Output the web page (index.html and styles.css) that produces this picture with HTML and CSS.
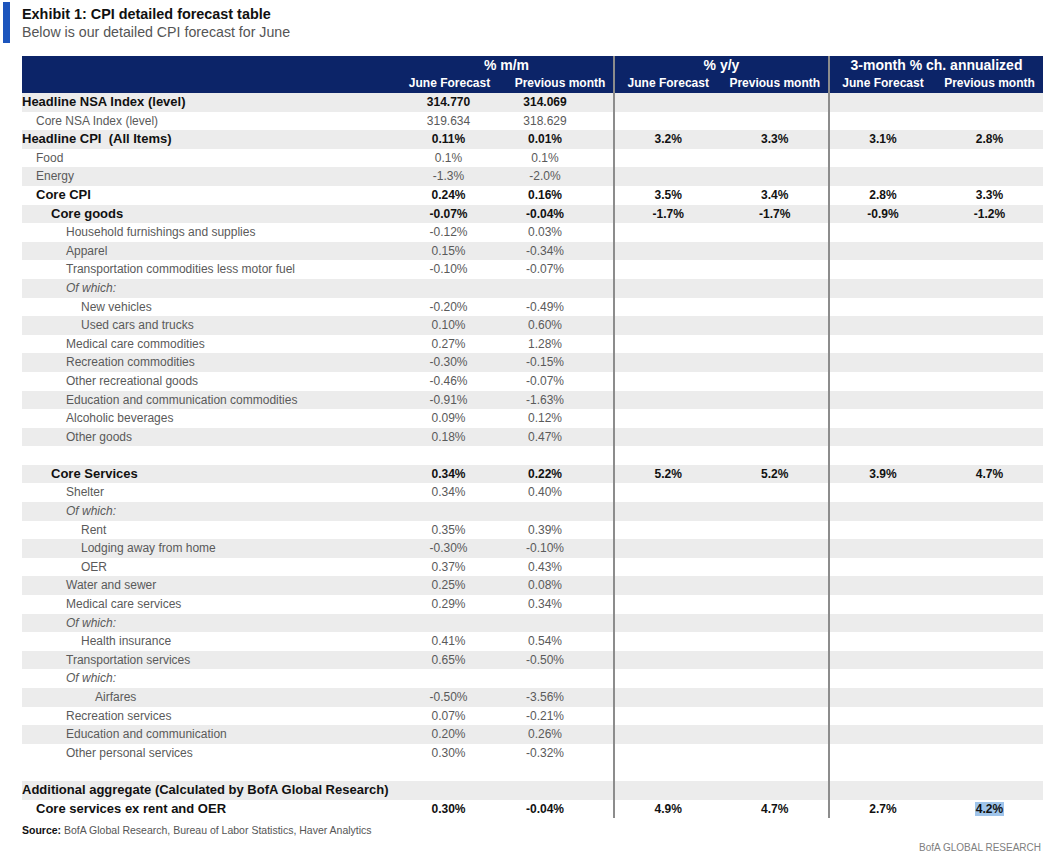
FILE: index.html
```html
<!DOCTYPE html>
<html lang="en">
<head>
<meta charset="utf-8">
<title>Exhibit 1: CPI detailed forecast table</title>
<link rel="stylesheet" href="styles.css">
</head>
<body>
<div class="page">
  <div class="exhibit-head">
    <div class="bar"></div>
    <div class="titles">
      <div class="title">Exhibit 1: CPI detailed forecast table</div>
      <div class="subtitle">Below is our detailed CPI forecast for June</div>
    </div>
  </div>

  <table class="cpi">
    <colgroup>
      <col class="c-label"><col class="c-a"><col class="c-b"><col class="c-c"><col class="c-d"><col class="c-e"><col class="c-f">
    </colgroup>
    <thead>
      <tr class="h1">
        <th></th>
        <th colspan="2" class="grp">% m/m</th>
        <th colspan="2" class="grp sep">% y/y</th>
        <th colspan="2" class="grp sep">3-month % ch. annualized</th>
      </tr>
      <tr class="h2">
        <th></th>
        <th class="sub s1">June Forecast</th>
        <th class="sub s2">Previous month</th>
        <th class="sub sep">June Forecast</th>
        <th class="sub">Previous month</th>
        <th class="sub sep">June Forecast</th>
        <th class="sub">Previous month</th>
      </tr>
    </thead>
    <tbody>
      <tr class="g b"><td class="l0">Headline NSA Index (level)</td><td class="m1">314.770</td><td class="m2">314.069</td><td class="sep"></td><td></td><td class="sep"></td><td></td></tr>
      <tr><td class="l1">Core NSA Index (level)</td><td class="m1">319.634</td><td class="m2">318.629</td><td class="sep"></td><td></td><td class="sep"></td><td></td></tr>
      <tr class="g b"><td class="l0">Headline CPI&nbsp; (All Items)</td><td class="m1">0.11%</td><td class="m2">0.01%</td><td class="sep">3.2%</td><td>3.3%</td><td class="sep">3.1%</td><td>2.8%</td></tr>
      <tr><td class="l1">Food</td><td class="m1">0.1%</td><td class="m2">0.1%</td><td class="sep"></td><td></td><td class="sep"></td><td></td></tr>
      <tr class="g"><td class="l1">Energy</td><td class="m1">-1.3%</td><td class="m2">-2.0%</td><td class="sep"></td><td></td><td class="sep"></td><td></td></tr>
      <tr class="b"><td class="l1">Core CPI</td><td class="m1">0.24%</td><td class="m2">0.16%</td><td class="sep">3.5%</td><td>3.4%</td><td class="sep">2.8%</td><td>3.3%</td></tr>
      <tr class="g b"><td class="l2">Core goods</td><td class="m1">-0.07%</td><td class="m2">-0.04%</td><td class="sep">-1.7%</td><td>-1.7%</td><td class="sep">-0.9%</td><td>-1.2%</td></tr>
      <tr><td class="l3">Household furnishings and supplies</td><td class="m1">-0.12%</td><td class="m2">0.03%</td><td class="sep"></td><td></td><td class="sep"></td><td></td></tr>
      <tr class="g"><td class="l3">Apparel</td><td class="m1">0.15%</td><td class="m2">-0.34%</td><td class="sep"></td><td></td><td class="sep"></td><td></td></tr>
      <tr><td class="l3">Transportation commodities less motor fuel</td><td class="m1">-0.10%</td><td class="m2">-0.07%</td><td class="sep"></td><td></td><td class="sep"></td><td></td></tr>
      <tr class="g"><td class="l3 it">Of which:</td><td class="m1"></td><td class="m2"></td><td class="sep"></td><td></td><td class="sep"></td><td></td></tr>
      <tr><td class="l4">New vehicles</td><td class="m1">-0.20%</td><td class="m2">-0.49%</td><td class="sep"></td><td></td><td class="sep"></td><td></td></tr>
      <tr class="g"><td class="l4">Used cars and trucks</td><td class="m1">0.10%</td><td class="m2">0.60%</td><td class="sep"></td><td></td><td class="sep"></td><td></td></tr>
      <tr><td class="l3">Medical care commodities</td><td class="m1">0.27%</td><td class="m2">1.28%</td><td class="sep"></td><td></td><td class="sep"></td><td></td></tr>
      <tr class="g"><td class="l3">Recreation commodities</td><td class="m1">-0.30%</td><td class="m2">-0.15%</td><td class="sep"></td><td></td><td class="sep"></td><td></td></tr>
      <tr><td class="l3">Other recreational goods</td><td class="m1">-0.46%</td><td class="m2">-0.07%</td><td class="sep"></td><td></td><td class="sep"></td><td></td></tr>
      <tr class="g"><td class="l3">Education and communication commodities</td><td class="m1">-0.91%</td><td class="m2">-1.63%</td><td class="sep"></td><td></td><td class="sep"></td><td></td></tr>
      <tr><td class="l3">Alcoholic beverages</td><td class="m1">0.09%</td><td class="m2">0.12%</td><td class="sep"></td><td></td><td class="sep"></td><td></td></tr>
      <tr class="g"><td class="l3">Other goods</td><td class="m1">0.18%</td><td class="m2">0.47%</td><td class="sep"></td><td></td><td class="sep"></td><td></td></tr>
      <tr><td class="l3"></td><td class="m1"></td><td class="m2"></td><td class="sep"></td><td></td><td class="sep"></td><td></td></tr>
      <tr class="g b"><td class="l2">Core Services</td><td class="m1">0.34%</td><td class="m2">0.22%</td><td class="sep">5.2%</td><td>5.2%</td><td class="sep">3.9%</td><td>4.7%</td></tr>
      <tr><td class="l3">Shelter</td><td class="m1">0.34%</td><td class="m2">0.40%</td><td class="sep"></td><td></td><td class="sep"></td><td></td></tr>
      <tr class="g"><td class="l3 it">Of which:</td><td class="m1"></td><td class="m2"></td><td class="sep"></td><td></td><td class="sep"></td><td></td></tr>
      <tr><td class="l4">Rent</td><td class="m1">0.35%</td><td class="m2">0.39%</td><td class="sep"></td><td></td><td class="sep"></td><td></td></tr>
      <tr class="g"><td class="l4">Lodging away from home</td><td class="m1">-0.30%</td><td class="m2">-0.10%</td><td class="sep"></td><td></td><td class="sep"></td><td></td></tr>
      <tr><td class="l4">OER</td><td class="m1">0.37%</td><td class="m2">0.43%</td><td class="sep"></td><td></td><td class="sep"></td><td></td></tr>
      <tr class="g"><td class="l3">Water and sewer</td><td class="m1">0.25%</td><td class="m2">0.08%</td><td class="sep"></td><td></td><td class="sep"></td><td></td></tr>
      <tr><td class="l3">Medical care services</td><td class="m1">0.29%</td><td class="m2">0.34%</td><td class="sep"></td><td></td><td class="sep"></td><td></td></tr>
      <tr class="g"><td class="l3 it">Of which:</td><td class="m1"></td><td class="m2"></td><td class="sep"></td><td></td><td class="sep"></td><td></td></tr>
      <tr><td class="l4">Health insurance</td><td class="m1">0.41%</td><td class="m2">0.54%</td><td class="sep"></td><td></td><td class="sep"></td><td></td></tr>
      <tr class="g"><td class="l3">Transportation services</td><td class="m1">0.65%</td><td class="m2">-0.50%</td><td class="sep"></td><td></td><td class="sep"></td><td></td></tr>
      <tr><td class="l3 it">Of which:</td><td class="m1"></td><td class="m2"></td><td class="sep"></td><td></td><td class="sep"></td><td></td></tr>
      <tr class="g"><td class="l5">Airfares</td><td class="m1">-0.50%</td><td class="m2">-3.56%</td><td class="sep"></td><td></td><td class="sep"></td><td></td></tr>
      <tr><td class="l3">Recreation services</td><td class="m1">0.07%</td><td class="m2">-0.21%</td><td class="sep"></td><td></td><td class="sep"></td><td></td></tr>
      <tr class="g"><td class="l3">Education and communication</td><td class="m1">0.20%</td><td class="m2">0.26%</td><td class="sep"></td><td></td><td class="sep"></td><td></td></tr>
      <tr><td class="l3">Other personal services</td><td class="m1">0.30%</td><td class="m2">-0.32%</td><td class="sep"></td><td></td><td class="sep"></td><td></td></tr>
      <tr><td class="l3"></td><td class="m1"></td><td class="m2"></td><td class="sep"></td><td></td><td class="sep"></td><td></td></tr>
      <tr class="g b"><td class="l0 wide">Additional aggregate (Calculated by BofA Global Research)</td><td class="m1"></td><td class="m2"></td><td class="sep"></td><td></td><td class="sep"></td><td></td></tr>
      <tr class="b"><td class="l1">Core services ex rent and OER</td><td class="m1">0.30%</td><td class="m2">-0.04%</td><td class="sep">4.9%</td><td>4.7%</td><td class="sep">2.7%</td><td><span class="sel">4.2%</span></td></tr>
    </tbody>
  </table>

  <div class="source"><b>Source:</b> BofA Global Research, Bureau of Labor Statistics, Haver Analytics</div>
  <div class="brand">BofA GLOBAL RESEARCH</div>
</div>
</body>
</html>
```

FILE: styles.css
```css
html, body {
  margin: 0;
  padding: 0;
  background: #ffffff;
}

body {
  font-family: "Liberation Sans", Arial, sans-serif;
  color: #555555;
}

.page {
  width: 1060px;
  height: 852px;
  padding: 2px 0 0 3px;
  box-sizing: border-box;
}

.exhibit-head {
  display: flex;
  align-items: stretch;
  height: 41px;
}

.bar {
  width: 7px;
  background: #1d55bd;
  flex: none;
}

.titles {
  padding-left: 12px;
  padding-top: 4px;
}

.title {
  font-size: 14.4px;
  font-weight: bold;
  color: #111111;
  line-height: 17px;
}

.subtitle {
  font-size: 14.2px;
  color: #555555;
  line-height: 18px;
}

.cpi {
  margin: 13px 0 0 19px;
  border-collapse: collapse;
  table-layout: fixed;
  width: 1021px;
}

.c-label { width: 378px; }
.c-a { width: 107px; }
.c-b { width: 107px; }
.c-c { width: 107.5px; }
.c-d { width: 107.5px; }
.c-e { width: 107px; }
.c-f { width: 107px; }

.cpi th,
.cpi td {
  padding: 0;
  white-space: nowrap;
}

.cpi thead th {
  background: #0c2468;
  color: #ffffff;
  font-weight: bold;
  text-align: center;
}

.h1 th {
  height: 18px;
  font-size: 14px;
  line-height: 18px;
  vertical-align: bottom;
}

.h2 th {
  height: 19px;
  font-size: 12px;
  line-height: 19px;
}

.h2 .s1 { padding-right: 8px; }
.h2 .s2 { padding-left: 0; }

.cpi .sep {
  border-left: 2px solid #8c8c8c;
}

.cpi tbody tr {
  height: 18.6px;
}

.cpi tbody td {
  height: 18.6px;
  font-size: 12px;
  line-height: 18.6px;
  text-align: center;
  color: #5a5a5a;
}

.cpi tbody tr.g td {
  background: #ececec;
}

.cpi tbody tr.b td {
  font-weight: bold;
  color: #111111;
}

.cpi tbody tr.b td:first-child {
  font-size: 13px;
}

.cpi td.m1 { padding-right: 10px; }
.cpi td.m2 { padding-right: 30px; }

.cpi td.l0,
.cpi td.l1,
.cpi td.l2,
.cpi td.l3,
.cpi td.l4,
.cpi td.l5 {
  text-align: left;
}

.cpi td.l0 { padding-left: 0; }
.cpi td.l1 { padding-left: 14px; }
.cpi td.l2 { padding-left: 29px; }
.cpi td.l3 { padding-left: 44px; }
.cpi td.l4 { padding-left: 59px; }
.cpi td.l5 { padding-left: 73px; }

.cpi td.it {
  font-style: italic;
}

.cpi td.wide {
  overflow: visible;
}

.sel {
  background: #9fc4ea;
  padding: 0 1px;
}

.source {
  margin: 5px 0 0 19px;
  font-size: 10.5px;
  color: #555555;
  line-height: 14px;
}

.source b {
  color: #111111;
}

.brand {
  text-align: right;
  padding-right: 19px;
  margin-top: 4px;
  font-size: 10px;
  color: #808080;
  line-height: 14px;
}
```
